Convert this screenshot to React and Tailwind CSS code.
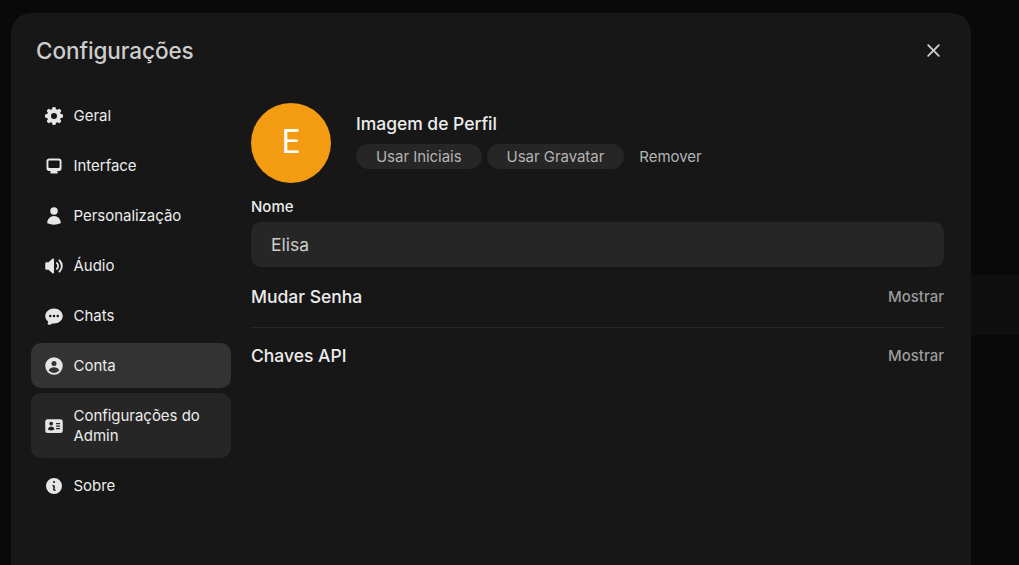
import {
  HiIdentification,
  HiMiniCog8Tooth,
  HiMiniInformationCircle,
  HiMiniXMark,
  HiUser,
} from "react-icons/hi2";

/* ─── 16px solid icons ─── */
const SolidIcon = ({ paths }) => (
  <svg viewBox="0 0 16 16" fill="currentColor" className="size-5">
    {paths.map((d) => (
      <path key={d} fillRule="evenodd" clipRule="evenodd" d={d} />
    ))}
  </svg>
);

const DESKTOP = [
  "M2 4.25A2.25 2.25 0 0 1 4.25 2h7.5A2.25 2.25 0 0 1 14 4.25v5.5A2.25 2.25 0 0 1 11.75 12h-1.312c.1.128.21.248.328.36a.75.75 0 0 1 .234.545v.345a.75.75 0 0 1-.75.75h-4.5a.75.75 0 0 1-.75-.75v-.345a.75.75 0 0 1 .234-.545c.118-.111.228-.232.328-.36H4.25A2.25 2.25 0 0 1 2 9.75v-5.5Zm2.25-.75a.75.75 0 0 0-.75.75v4.5c0 .414.336.75.75.75h7.5a.75.75 0 0 0 .75-.75v-4.5a.75.75 0 0 0-.75-.75h-7.5Z",
];

const SPEAKER = [
  "M7.557 2.066A.75.75 0 0 1 8 2.75v10.5a.75.75 0 0 1-1.248.56L3.59 11H2a1 1 0 0 1-1-1V6a1 1 0 0 1 1-1h1.59l3.162-2.81a.75.75 0 0 1 .805-.124ZM12.95 3.05a.75.75 0 1 0-1.06 1.06 5.5 5.5 0 0 1 0 7.78.75.75 0 1 0 1.06 1.06 7 7 0 0 0 0-9.9Z",
  "M10.828 5.172a.75.75 0 1 0-1.06 1.06 2.5 2.5 0 0 1 0 3.536.75.75 0 1 0 1.06 1.06 4 4 0 0 0 0-5.656Z",
];

const CHAT = [
  "M8 2C4.262 2 1 4.57 1 8c0 1.86.98 3.486 2.455 4.566a3.472 3.472 0 0 1-.469 1.26.75.75 0 0 0 .713 1.14 6.961 6.961 0 0 0 3.06-1.06c.403.062.818.094 1.241.094 3.738 0 7-2.57 7-6s-3.262-6-7-6ZM5 9a1 1 0 1 0 0-2 1 1 0 0 0 0 2Zm7-1a1 1 0 1 1-2 0 1 1 0 0 1 2 0ZM8 9a1 1 0 1 0 0-2 1 1 0 0 0 0 2Z",
];

const USER_CIRCLE = [
  "M15 8A7 7 0 1 1 1 8a7 7 0 0 1 14 0Zm-5-2a2 2 0 1 1-4 0 2 2 0 0 1 4 0ZM8 9c-1.825 0-3.422.977-4.295 2.437A5.49 5.49 0 0 0 8 13.5a5.49 5.49 0 0 0 4.294-2.063A4.997 4.997 0 0 0 8 9Z",
];

const TABS = [
  { id: "general", label: "Geral", icon: <HiMiniCog8Tooth className="size-5" /> },
  { id: "interface", label: "Interface", icon: <SolidIcon paths={DESKTOP} /> },
  { id: "personalization", label: "Personalização", icon: <HiUser className="size-5" /> },
  { id: "audio", label: "Áudio", icon: <SolidIcon paths={SPEAKER} /> },
  { id: "chats", label: "Chats", icon: <SolidIcon paths={CHAT} /> },
  { id: "account", label: "Conta", icon: <SolidIcon paths={USER_CIRCLE} />, bg: "bg-[#333333]" },
  {
    id: "admin",
    label: "Configurações do Admin",
    icon: <HiIdentification className="size-5" />,
    bg: "bg-[#262626]",
  },
  { id: "about", label: "Sobre", icon: <HiMiniInformationCircle className="size-5" /> },
];

const TabButton = ({ tab }) => (
  <button
    className={`flex w-full items-center gap-2.5 rounded-[10px] px-[12.5px] py-[12.5px] text-left ${tab.bg ?? ""}`}
  >
    <span className="shrink-0 text-[#e6e6e6]">{tab.icon}</span>
    <span className="text-[15px] leading-5 tracking-[-0.03px]">{tab.label}</span>
  </button>
);

const ExpandableRow = ({ title }) => (
  <div className="flex items-center justify-between">
    <h3 className="text-[17.5px] leading-[25px] font-medium">{title}</h3>
    <button className="text-[15px] leading-5 font-medium text-[#9b9b9b]">Mostrar</button>
  </div>
);

const AccountPanel = () => (
  <section className="min-w-0 flex-1">
    <div className="flex gap-[25px]">
      <div className="flex size-20 items-center justify-center rounded-full bg-[#f39c12] pb-[3px] text-[32px] leading-none text-white">
        E
      </div>
      <div className="pt-2">
        <h3 className="text-[17.5px] leading-[25px] font-medium tracking-[-0.03px]">
          Imagem de Perfil
        </h3>
        <div className="mt-2 flex gap-[5px] text-[15px] leading-[25px] tracking-[-0.04px] text-[#b4b4b4]">
          <button className="rounded-full bg-[#262626] px-5">Usar Iniciais</button>
          <button className="rounded-full bg-[#262626] px-5">Usar Gravatar</button>
          <button className="px-2.5">Remover</button>
        </div>
      </div>
    </div>

    <label className="mt-3.5 block text-[15px] leading-5 font-medium">Nome</label>
    <input
      className="mt-[5px] block h-[45px] w-full rounded-[10px] bg-[#262626] px-5 text-[17.5px] leading-[25px] text-[#cdcdcd] outline-none"
      defaultValue="Elisa"
    />

    <div className="mt-[17px]">
      <ExpandableRow title="Mudar Senha" />
      <hr className="mt-[18px] mb-[15px] border-[#262626]" />
      <ExpandableRow title="Chaves API" />
    </div>
  </section>
);

const App = () => {
  return (
    <div className="relative h-[565px] w-full overflow-hidden bg-[#090909] font-['Inter',sans-serif]">
      <div className="absolute top-[275px] right-0 h-[60px] w-12 bg-[#0f0f0f]" />

      <main className="relative mt-[13px] ml-[11px] h-[600px] w-[960px] rounded-[20px] bg-[#171717] text-[#ececec]">
        <header className="flex items-center justify-between pt-[25px] pr-[25px] pl-[25px] text-[#cdcdcd]">
          <h1 className="text-[22.5px] leading-[25px] font-medium tracking-[-0.08px]">
            Configurações
          </h1>
          <button aria-label="Fechar">
            <HiMiniXMark className="size-[25px]" />
          </button>
        </header>

        <div className="flex gap-5 pt-[30px] pr-[27px] pl-5">
          <nav className="flex w-[200px] flex-col gap-[5px]">
            {TABS.map((tab) => (
              <TabButton key={tab.id} tab={tab} />
            ))}
          </nav>
          <div className="flex min-w-0 flex-1 pt-2.5">
            <AccountPanel />
          </div>
        </div>
      </main>
    </div>
  );
};

export default App;
